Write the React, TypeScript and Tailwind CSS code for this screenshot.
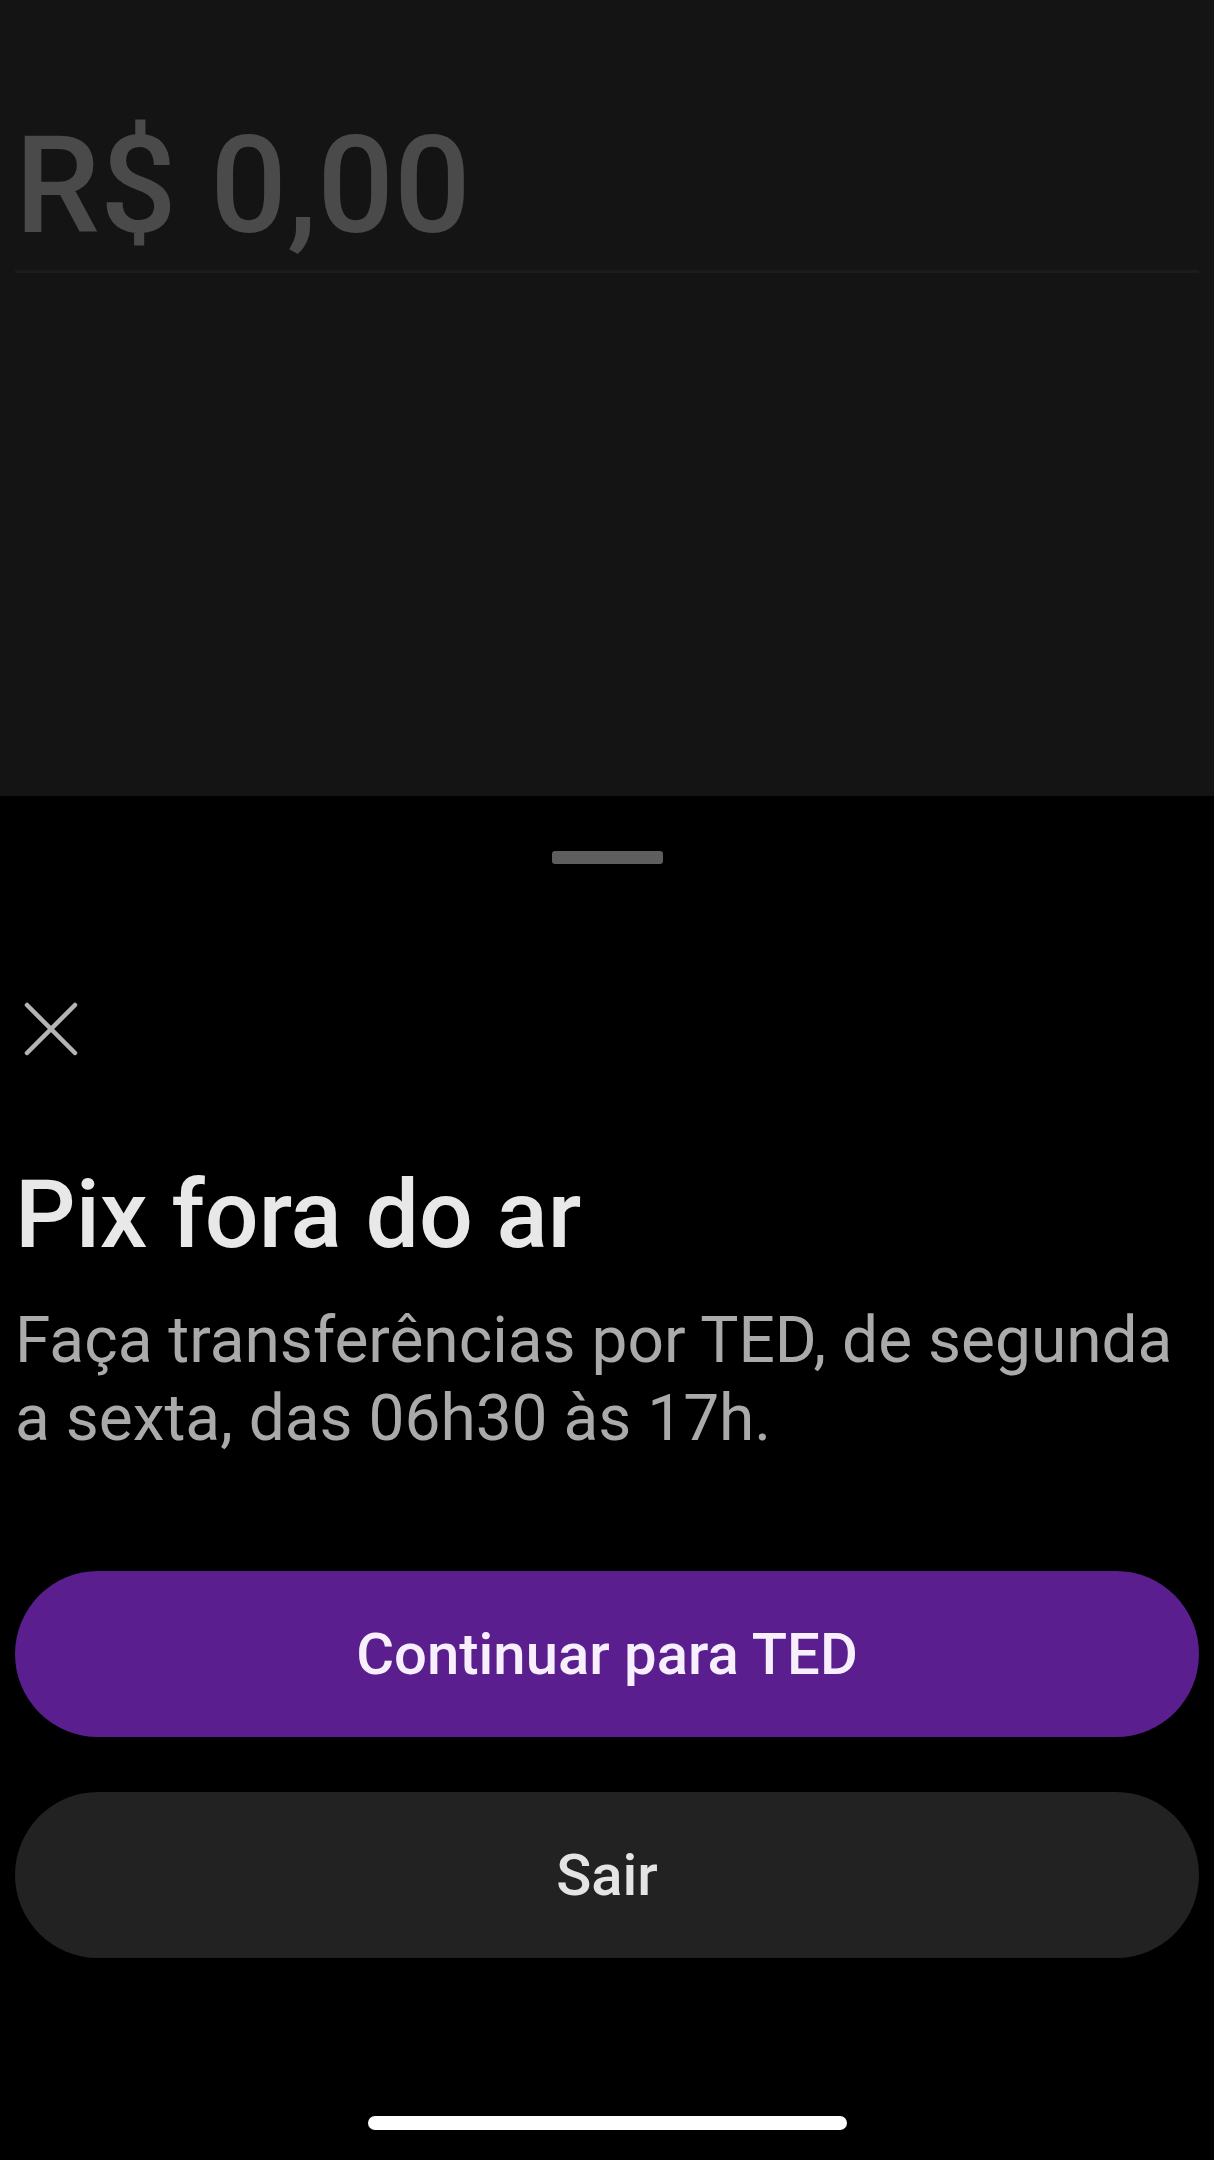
export default function App() {
  return (
    <div className="w-[1214px] h-[2160px] bg-black flex flex-col font-['Roboto',sans-serif] overflow-hidden">
      {/* Amount screen behind the sheet */}
      <div className="h-[796px] bg-[#141414] px-[15px] pt-[119px]">
        <div className="text-[135px] leading-[135px] font-medium text-[#4a4a4a]">R$ 0,00</div>
        <div className="mt-[16px] h-[3px] bg-[#1c1c1c]" />
      </div>

      {/* Bottom sheet */}
      <div className="flex-1 flex flex-col px-[15px] pt-[55px]">
        <div className="self-center w-[111px] h-[13px] rounded-[3px] bg-[#5e5e5e]" />

        <button className="mt-[138px] w-[54px] h-[54px] ml-[9px] text-[#b4b4b4]">
          <svg width="54" height="54" viewBox="0 0 54 54" fill="none" stroke="currentColor" strokeWidth="4.5" strokeLinecap="round">
            <line x1="3" y1="3" x2="51" y2="51" />
            <line x1="51" y1="3" x2="3" y2="51" />
          </svg>
        </button>

        <h1 className="mt-[111px] text-[95px] leading-[95px] font-medium text-[#e8e8e8]">Pix fora do ar</h1>
        <p className="mt-[40px] text-[64px] leading-[78px] text-[#aaaaaa]">
          Faça transferências por TED, de segunda
          <br />
          a sexta, das 06h30 às 17h.
        </p>

        <div className="mt-[113px] flex flex-col gap-[55px]">
          <button className="h-[166px] w-full rounded-full bg-[#5a1e8e] text-[58px] font-medium text-[#f7effc]">
            Continuar para TED
          </button>
          <button className="h-[166px] w-full rounded-full bg-[#222222] text-[58px] font-medium text-[#e4e4e4]">
            Sair
          </button>
        </div>

        <div className="mt-auto mb-[30px] self-center w-[479px] h-[14px] rounded-full bg-white" />
      </div>
    </div>
  );
}
